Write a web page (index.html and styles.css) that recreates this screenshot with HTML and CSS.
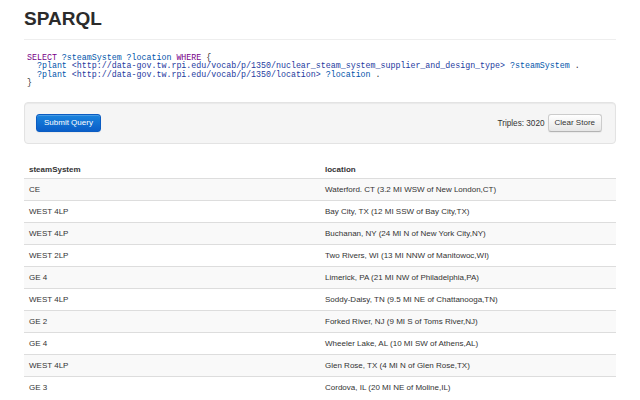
FILE: index.html
```html
<!DOCTYPE html>
<html>
<head>
<meta charset="utf-8">
<title>SPARQL</title>
<link rel="stylesheet" href="styles.css">
</head>
<body>
<div class="container">
  <h1 class="title">SPARQL</h1>
  <hr class="rule">
  <pre class="query"><span class="kw">SELECT</span> <span class="var">?steamSystem</span> <span class="var">?location</span> <span class="kw">WHERE</span> <span class="br">{</span>
  <span class="var">?plant</span> <span class="uri">&lt;http://data-gov.tw.rpi.edu/vocab/p/1350/nuclear_steam_system_supplier_and_design_type&gt;</span> <span class="var">?steamSystem</span> <span class="br">.</span>
  <span class="var">?plant</span> <span class="uri">&lt;http://data-gov.tw.rpi.edu/vocab/p/1350/location&gt;</span> <span class="var">?location</span> <span class="br">.</span>
<span class="br">}</span></pre>
  <div class="well">
    <button class="btn btn-primary">Submit Query</button>
    <div class="store">
      <span class="triples">Triples: 3020</span>
      <button class="btn">Clear Store</button>
    </div>
  </div>
  <table class="results">
    <thead>
      <tr><th>steamSystem</th><th>location</th></tr>
    </thead>
    <tbody>
      <tr><td>CE</td><td>Waterford. CT (3.2 MI WSW of New London,CT)</td></tr>
      <tr><td>WEST 4LP</td><td>Bay City, TX (12 MI SSW of Bay City,TX)</td></tr>
      <tr><td>WEST 4LP</td><td>Buchanan, NY (24 MI N of New York City,NY)</td></tr>
      <tr><td>WEST 2LP</td><td>Two Rivers, WI (13 MI NNW of Manitowoc,WI)</td></tr>
      <tr><td>GE 4</td><td>Limerick, PA (21 MI NW of Philadelphia,PA)</td></tr>
      <tr><td>WEST 4LP</td><td>Soddy-Daisy, TN (9.5 MI NE of Chattanooga,TN)</td></tr>
      <tr><td>GE 2</td><td>Forked River, NJ (9 MI S of Toms River,NJ)</td></tr>
      <tr><td>GE 4</td><td>Wheeler Lake, AL (10 MI SW of Athens,AL)</td></tr>
      <tr><td>WEST 4LP</td><td>Glen Rose, TX (4 MI N of Glen Rose,TX)</td></tr>
      <tr><td>GE 3</td><td>Cordova, IL (20 MI NE of Moline,IL)</td></tr>
    </tbody>
  </table>
</div>
</body>
</html>
```
FILE: styles.css
```css
html, body {
  margin: 0;
  padding: 0;
  overflow: hidden;
  background: #fff;
}
body {
  font-family: "Liberation Sans", Arial, Helvetica, sans-serif;
  font-size: 8px;
  line-height: 11px;
  color: #333;
}
.container {
  width: 592px;
  margin: 0 auto;
}
.title {
  margin: 7px 0 0;
  font-size: 19px;
  line-height: 24px;
  font-weight: bold;
  color: #2b2b2b;
}
.rule {
  margin: 8px 0 0;
  border: 0;
  border-top: 1px solid #eee;
  height: 0;
}
.query {
  margin: 14px 0 0;
  padding: 0 0 0 3px;
  font-family: "Liberation Mono", "Courier New", monospace;
  font-size: 8.3px;
  line-height: 8.3px;
  color: #333;
  white-space: pre;
}
.kw { color: #770088; }
.var { color: #0055aa; }
.uri { color: #1d3a9e; }
.br { color: #333; }
.well {
  margin-top: 15px;
  display: flex;
  justify-content: space-between;
  align-items: center;
  padding: 11px 13px 11px 11px;
  background: #f5f5f5;
  border: 1px solid #e3e3e3;
  border-radius: 4px;
  box-shadow: inset 0 1px 1px rgba(0,0,0,0.05);
}
.store {
  display: flex;
  align-items: center;
  gap: 3px;
}
.triples {
  font-size: 8.2px;
  color: #333;
}
.btn {
  font-family: "Liberation Sans", Arial, Helvetica, sans-serif;
  font-size: 8px;
  line-height: 10px;
  padding: 3px 6px;
  height: 18px;
  border: 1px solid #ccc;
  border-bottom-color: #b3b3b3;
  border-radius: 3px;
  color: #333;
  background: linear-gradient(#ffffff, #e6e6e6);
  box-shadow: inset 0 1px 0 rgba(255,255,255,0.2), 0 1px 1px rgba(0,0,0,0.05);
  cursor: pointer;
}
.btn-primary {
  padding: 3px 7px;
  color: #fff;
  border-color: #0b5cc2;
  background: linear-gradient(#1a84dd, #0a5ec8);
}
.results {
  width: 100%;
  margin-top: 14px;
  border-collapse: collapse;
  border-spacing: 0;
  table-layout: fixed;
}
.results th,
.results td {
  text-align: left;
  padding: 5px;
  line-height: 11px;
  font-size: 8px;
  color: #333;
  vertical-align: top;
}
.results th {
  padding: 6px 5px 3px;
  font-weight: bold;
}
.results td {
  border-top: 1px solid #ddd;
}
.results tbody tr:nth-child(odd) td {
  background: #f9f9f9;
}
```
